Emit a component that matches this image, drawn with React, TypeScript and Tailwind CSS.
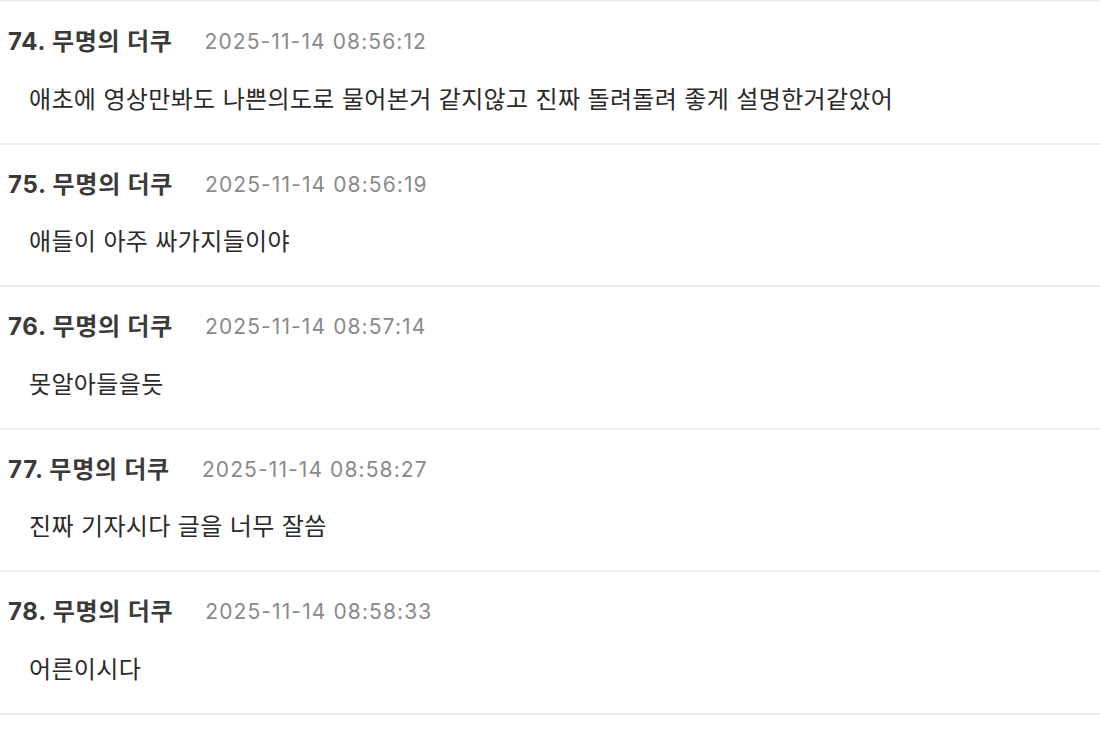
const comments = [
  { no: 74, author: '무명의 더쿠', date: '2025-11-14 08:56:12', body: '애초에 영상만봐도 나쁜의도로 물어본거 같지않고 진짜 돌려돌려 좋게 설명한거같았어' },
  { no: 75, author: '무명의 더쿠', date: '2025-11-14 08:56:19', body: '애들이 아주 싸가지들이야' },
  { no: 76, author: '무명의 더쿠', date: '2025-11-14 08:57:14', body: '못알아들을듯' },
  { no: 77, author: '무명의 더쿠', date: '2025-11-14 08:58:27', body: '진짜 기자시다 글을 너무 잘씀' },
  { no: 78, author: '무명의 더쿠', date: '2025-11-14 08:58:33', body: '어른이시다' },
];

export default function App() {
  return (
    <div
      className="w-[1100px] h-[732px] bg-white overflow-hidden"
      style={{ fontFamily: "Inter, 'Noto Sans CJK KR', sans-serif" }}
    >
      {comments.map((c) => (
        <div key={c.no} className="h-[142.5px] border-t-2 border-[#ededed] pt-[26px] box-border">
          <div className="flex items-center h-[28px] pl-[8px]">
            <span className="text-[24px] font-bold text-[#3a3a3a] leading-[28px] tracking-[0.75px]">
              {c.no}. {c.author}
            </span>
            <span className="ml-[32px] text-[21px] text-[#8a8a8a] leading-[28px] tracking-[1.1px]">{c.date}</span>
          </div>
          <p className="mt-[28.5px] pl-[29px] text-[24px] leading-[30px] text-[#2a2a2a] tracking-[0.35px]">{c.body}</p>
        </div>
      ))}
      <div className="border-t-2 border-[#ededed]" />
    </div>
  );
}
